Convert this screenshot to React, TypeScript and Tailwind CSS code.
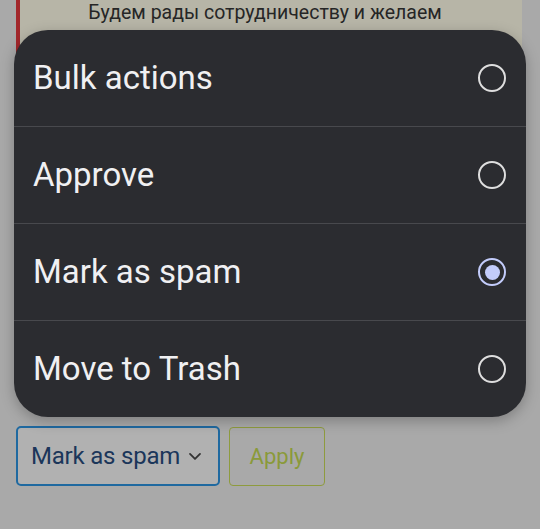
import { useState } from "react";

const options = ["Bulk actions", "Approve", "Mark as spam", "Move to Trash"];

function Radio({ checked }: { checked: boolean }) {
  if (checked) {
    return (
      <span className="flex h-[28px] w-[28px] items-center justify-center rounded-full border-[2.5px] border-[#c3ccfb]">
        <span className="h-[15px] w-[15px] rounded-full bg-[#c3ccfb]" />
      </span>
    );
  }
  return <span className="block h-[28px] w-[28px] rounded-full border-[2.5px] border-[#dedede]" />;
}

export default function App() {
  const [selected, setSelected] = useState(2);

  return (
    <div
      className="relative h-[529px] w-[540px] overflow-hidden bg-[#a9a9a9]"
      style={{ fontFamily: "Roboto, 'Noto Sans', sans-serif" }}
    >
      {/* comment card behind the sheet */}
      <div className="ml-[16px] mr-[18px] h-[120px] border-l-[4px] border-[#a2272b] bg-[#b7b5a7] pr-[12px] text-center text-[19.5px] leading-[26px] text-[#262626]">
        Будем рады сотрудничеству и желаем
      </div>

      {/* bulk actions controls */}
      <div className="absolute left-[16px] top-[426px] flex gap-[9px]">
        <div className="flex h-[60px] w-[204px] items-center justify-between rounded-[5px] border-2 border-[#1f69a0] bg-[#b1b1b1] pl-[13px] pr-[13px]">
          <span className="text-[24px] tracking-[-0.2px] text-[#1b365a]">{options[selected]}</span>
          <svg width="20" height="20" viewBox="0 0 24 24" fill="none" stroke="#333" strokeWidth="2.2" strokeLinecap="round" strokeLinejoin="round">
            <path d="M6 9.5l6 6 6-6" />
          </svg>
        </div>
        <button className="mt-[1px] h-[59px] w-[96px] rounded-[4px] border-[1.5px] border-[#8e9b3e] text-[22px] text-[#8a9a3a]">
          Apply
        </button>
      </div>

      {/* select sheet */}
      <div className="absolute left-[14px] top-[30px] w-[512px] overflow-hidden rounded-[34px] bg-[#2b2c30] shadow-[0_4px_14px_rgba(0,0,0,0.25)]">
        {options.map((opt, i) => (
          <div key={opt}>
            {i > 0 && <div className="h-px bg-[#48494d]" />}
            <button
              onClick={() => setSelected(i)}
              className="flex h-[96px] w-full items-center justify-between pl-[19px] pr-[20px] text-left"
            >
              <span className="text-[33px] text-[#f0f0f2]">{opt}</span>
              <Radio checked={selected === i} />
            </button>
          </div>
        ))}
      </div>
    </div>
  );
}
